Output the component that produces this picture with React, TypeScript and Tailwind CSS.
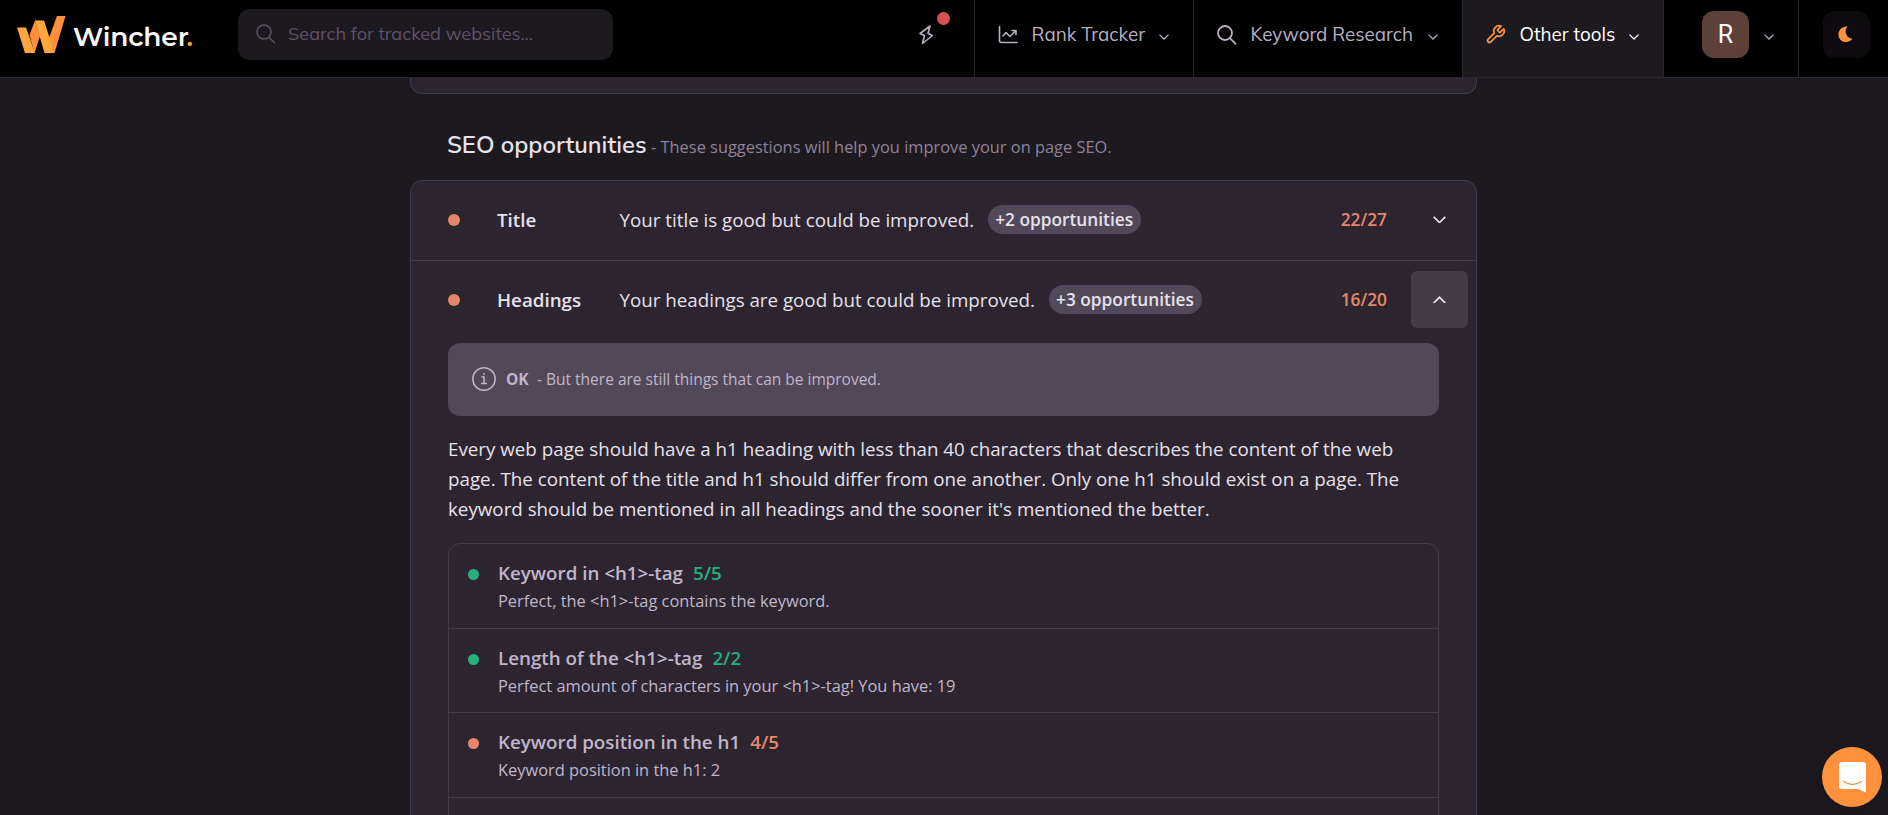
import React from "react";

const ROUNDED = "font-['Muli','Mulish','Nunito','Open_Sans',sans-serif]";

function Chevron({ className, up = false, w = 10, sw = 1.3 }: { className?: string; up?: boolean; w?: number; sw?: number }) {
  return (
    <svg className={className} width={w} height={(w * 6) / 10} viewBox="0 0 10 6" fill="none" stroke="currentColor" strokeWidth={sw}>
      <path d={up ? "M0.5 5.4L5 1L9.5 5.4" : "M0.5 0.6L5 5L9.5 0.6"} />
    </svg>
  );
}

function SearchIcon({ className, sw }: { className?: string; sw: number }) {
  return (
    <svg className={className} width="20" height="20" viewBox="0 0 20 20" fill="none" stroke="currentColor" strokeWidth={sw} strokeLinecap="round">
      <circle cx="8" cy="8" r="7" />
      <path d="M13 13.2L18.6 18.8" />
    </svg>
  );
}

function Logo() {
  return (
    <div className="flex w-[221px] shrink-0 pl-[17px]">
      <svg width="49" height="37" viewBox="0 0 49 37" className="mt-4 shrink-0">
        <path d="M40 0H48.500L37.500 37L32 22Z" fill="#ff8f3d" />
        <path d="M18 4.500L12.500 19L17.500 37L23 20Z" fill="#ff8f3d" />
        <path d="M18 4.500H27L37.500 37H27.500Z" fill="#ffa63d" />
        <path d="M0 11.500H9L18 37H8Z" fill="#ffa63d" />
      </svg>
      <span className="ml-[7px] mt-[18px] font-['Montserrat','Inter',sans-serif] text-[26.5px] font-semibold leading-[38px] tracking-[-0.2px] text-[#fbf8f7]">
        Wincher<span className="-ml-[2px] text-[#ff9c33]">.</span>
      </span>
    </div>
  );
}

function NavItem({ icon, label, width, active = false }: { icon: React.ReactNode; label: string; width: string; active?: boolean }) {
  return (
    <div
      className={`flex ${width} shrink-0 border-l border-[#2b2730] pl-[23px] pr-6 pt-[22px] ${active ? "bg-[#1d1a1f] text-white" : "text-[#b9afc3]"}`}
    >
      {icon}
      <span className={`ml-[13.5px] whitespace-nowrap text-[18.8px] leading-6 ${ROUNDED}`}>{label}</span>
      <Chevron className="ml-auto mt-3 shrink-0" />
    </div>
  );
}

function Row({ name, text, tag, score, open = false }: { name: string; text: string; tag: string; score: string; open?: boolean }) {
  return (
    <div className="flex h-[79px] items-center pb-[2px] pl-[37px] pr-2">
      <span className="h-3 w-3 rounded-full bg-[#e6876a]" />
      <span className="ml-[37px] mt-px w-[122.5px] text-[18.75px] font-semibold">{name}</span>
      <span className="mt-px text-[18.76px]">{text}</span>
      <span className="ml-[13.5px] flex h-[29px] items-center rounded-[15px] bg-[#51485a] px-[7.5px] text-[17.3px] font-semibold">{tag}</span>
      <span className="ml-auto mt-px text-[17.3px] font-semibold text-[#e6876a]">{score}</span>
      <span className={`ml-6 flex h-[57px] w-[57px] items-center justify-center rounded-md ${open ? "bg-[#433b49]" : ""}`}>
        <Chevron up={open} w={13} />
      </span>
    </div>
  );
}

function Check({ title, score, text, good = false }: { title: string; score: string; text: string; good?: boolean }) {
  return (
    <div className="flex h-[84.500px] shrink-0 border-b border-[#433b49] pl-[19px] pt-[15px]">
      <span className={`mt-[10px] h-[11px] w-[11px] rounded-full ${good ? "bg-[#24b17e]" : "bg-[#e6876a]"}`} />
      <div className="ml-[19px]">
        <div className="text-[18.75px] font-semibold leading-7">
          {title}
          <span className={`ml-[10px] font-semibold ${good ? "text-[#24b17e]" : "text-[#e6876a]"}`}>{score}</span>
        </div>
        <div className="text-[16.4px] leading-7">{text}</div>
      </div>
    </div>
  );
}

export default function App() {
  return (
    <div className="relative flex h-[815px] flex-col overflow-hidden bg-[#1d1a1f] font-['Open_Sans',sans-serif] text-[#e6e1ea]">
      <header className="flex h-[78px] shrink-0 border-b border-[#2b2730] bg-black">
        <Logo />
        <div className="ml-[17px] mt-[9px] flex h-[51px] w-[375px] shrink-0 rounded-xl bg-[#1d1a1f] pl-[18px] pt-[15px] text-[#5f5169]">
          <SearchIcon sw={1.5} />
          <span className={`ml-3 text-[18.15px] leading-5 ${ROUNDED}`}>Search for tracked websites...</span>
        </div>
        <div className="relative ml-auto w-[70px] pt-[25px] text-[#b9afc3]">
          <svg width="17" height="20" viewBox="0 0 17 20" fill="none" stroke="currentColor" strokeWidth="1.600" strokeLinejoin="round" className="ml-[14px]">
            <path d="M12 1L2 8.500L6.500 10.500L4.500 18.500L14.500 10.500L10 8.500Z" />
          </svg>
          <span className="absolute left-[33px] top-3 h-[13px] w-[13px] rounded-full bg-[#d45453]" />
        </div>
        <NavItem
          width="w-[219px]"
          label="Rank Tracker"
          icon={
            <svg width="20" height="20" viewBox="0 0 20 20" fill="none" stroke="currentColor" strokeWidth="1.600" strokeLinecap="round" strokeLinejoin="round" className="mt-[3px]">
              <path d="M1.500 1.500V15.500Q1.500 17.500 3.500 17.500H19M5 11L8 7.500L12 11.500L17.500 6M14 5.500H18V9.500" />
            </svg>
          }
        />
        <NavItem width="w-[269px]" label="Keyword Research" icon={<SearchIcon className="mt-[3px]" sw={1.8} />} />
        <NavItem
          width="w-[201px]"
          label="Other tools"
          active
          icon={
            <svg width="21" height="21" viewBox="0 0 24 24" fill="none" stroke="#ff913c" strokeWidth="2" strokeLinecap="round" strokeLinejoin="round" className="-ml-px mt-0.5">
              <path d="M14.700 6.300a1 1 0 0 0 0 1.400l1.600 1.600a1 1 0 0 0 1.400 0l3.770-3.770a6 6 0 0 1-7.940 7.940l-6.910 6.910a2.120 2.120 0 0 1-3-3l6.910-6.910a6 6 0 0 1 7.940-7.940l-3.760 3.760z" />
            </svg>
          }
        />
        <div className="flex w-[135px] shrink-0 border-l border-[#2b2730] pl-[38px] pt-[11px] text-[#b9afc3]">
          <span className="flex h-[47px] w-[47px] items-center justify-center rounded-xl bg-[#5d4037] font-['Roboto',sans-serif] text-[25px] text-white">R</span>
          <Chevron className="ml-[15px] mt-[23px]" />
        </div>
        <div className="w-[90px] shrink-0 border-l border-[#2b2730] pl-6 pt-[11px]">
          <span className="flex h-[47px] w-[47px] items-center justify-center rounded-xl bg-[#0d0b0e]">
            <svg width="15" height="17" viewBox="0 0 15 17" className="mr-0.5">
              <path d="M9.500 0.500C5.500 5.500 8.500 12.500 14.500 12.800C10 18.500 0.500 16.500 0.500 8.500C0.500 3 5 0 9.500 0.500Z" fill="#ff913c" />
            </svg>
          </span>
        </div>
      </header>

      <main className="ml-[410px] flex w-[1067px] grow flex-col">
        <div className="h-4 shrink-0 rounded-b-xl border border-t-0 border-[#433b49] bg-[#2c2530]" />
        <div className="flex h-[86px] shrink-0 items-baseline pl-[37px] pt-[35px]">
          <h2 className="w-[199px] whitespace-nowrap font-['Nunito','Open_Sans',sans-serif] text-[23.9px] font-semibold leading-8">SEO opportunities</h2>
          <span className="ml-[5px] text-[16.4px] text-[#8e8299]">- These suggestions will help you improve your on page SEO.</span>
        </div>
        <section className="h-[700px] shrink-0 rounded-t-xl border border-[#433b49] bg-[#2c2530]">
          <Row name="Title" text="Your title is good but could be improved." tag="+2 opportunities" score="22/27" />
          <div className="border-t border-[#433b49]">
            <Row name="Headings" text="Your headings are good but could be improved." tag="+3 opportunities" score="16/20" open />
          </div>
          <div className="mx-[37px] mt-[3px]">
            <div className="flex h-[73px] items-center rounded-xl bg-[#51485a] pl-6 text-[15.5px] text-[#c0b6ca]">
              <svg width="24" height="24" viewBox="0 0 24 24" fill="none" stroke="currentColor" strokeWidth="1.500" className="-mt-px">
                <circle cx="12" cy="12" r="11.200" />
                <path d="M9.500 10H12V16.500M9 16.500H15M11.200 7H12.800" />
              </svg>
              <span className="ml-[10px] w-[22px] font-bold">OK</span>
              <span className="ml-[9px]">- But there are still things that can be improved.</span>
            </div>
            <p className="mt-[18px] text-[18.78px] leading-[30px]">
              Every web page should have a h1 heading with less than 40 characters that describes the content of the web
              page. The content of the title and h1 should differ from one another. Only one h1 should exist on a page. The
              keyword should be mentioned in all headings and the sooner it's mentioned the better.
            </p>
            <div className="mt-[19px] flex h-[400px] flex-col rounded-t-xl border border-[#433b49] text-[#c0b6ca]">
              <Check title="Keyword in <h1>-tag" score="5/5" text="Perfect, the <h1>-tag contains the keyword." good />
              <Check title="Length of the <h1>-tag" score="2/2" text="Perfect amount of characters in your <h1>-tag! You have: 19" good />
              <Check title="Keyword position in the h1" score="4/5" text="Keyword position in the h1: 2" />
            </div>
          </div>
        </section>
      </main>

      <div className="absolute bottom-2 right-1.5 flex h-[60px] w-[60px] items-center justify-center rounded-full bg-[#ff913c] shadow-[0_2px_16px_rgba(0,0,0,0.25)]">
        <svg width="27" height="31" viewBox="0 0 27 31">
          <path d="M3 0H24Q27 0 27 3V30.500L19 27H3Q0 27 0 24V3Q0 0 3 0Z" fill="#fff" />
          <path d="M4.500 19.500Q13.500 25.500 22.500 19.500" fill="none" stroke="#ff913c" strokeWidth="1.400" strokeLinecap="round" />
        </svg>
      </div>
    </div>
  );
}
